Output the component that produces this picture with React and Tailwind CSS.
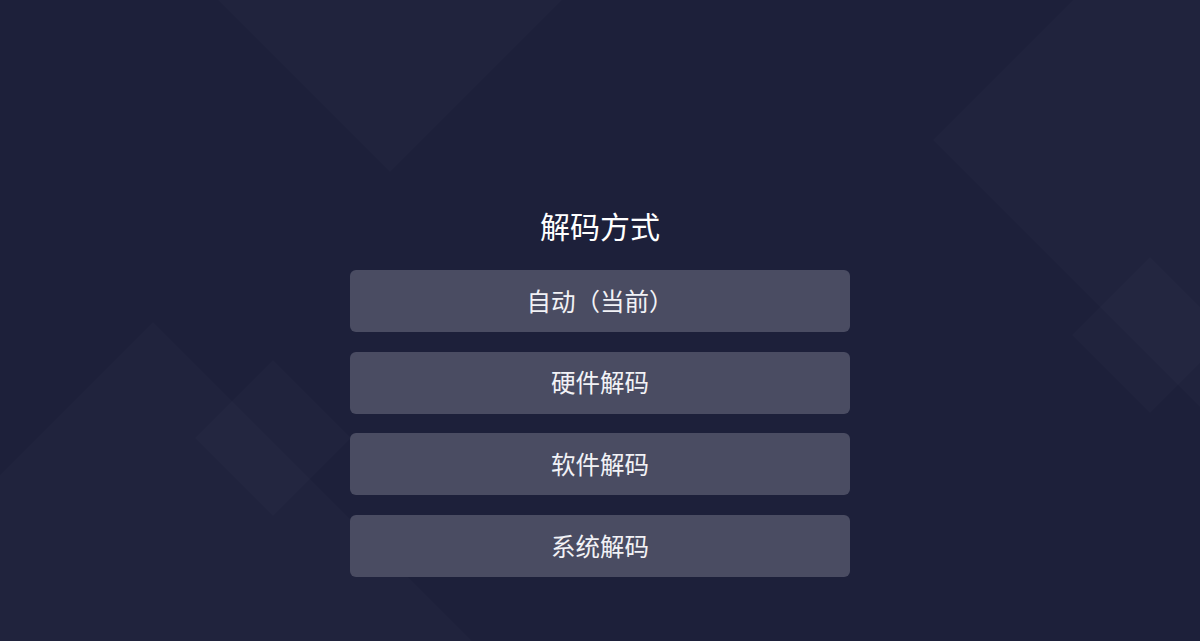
import React from "react";

const items = ["自动（当前）", "硬件解码", "软件解码", "系统解码"];

function Diamond({ cx, cy, r }) {
  return (
    <polygon
      points={`${cx},${cy - r} ${cx + r},${cy} ${cx},${cy + r} ${cx - r},${cy}`}
      fill="#ffffff"
      fillOpacity="0.014"
    />
  );
}

export default function App() {
  return (
    <div
      className="relative w-full h-[641px] overflow-hidden bg-[#1d203a] flex flex-col items-center"
      style={{ fontFamily: '"Noto Sans CJK SC", "Noto Sans", sans-serif' }}
    >
      <svg className="absolute inset-0 w-full h-full" viewBox="0 0 1200 641" preserveAspectRatio="none">
        <Diamond cx={390} cy={-10} r={182} />
        <Diamond cx={1233} cy={140} r={300} />
        <Diamond cx={1150} cy={335} r={78} />
        <Diamond cx={153} cy={652} r={330} />
        <Diamond cx={273} cy={438} r={78} />
      </svg>
      <div className="relative flex flex-col items-center pt-[204px]">
        <h1 className="text-[30px] leading-[42px] text-white font-normal">解码方式</h1>
        <div className="mt-[24px] flex flex-col gap-[19.7px]">
          {items.map((t) => (
            <button
              key={t}
              className="w-[500px] h-[62px] rounded-md bg-[#4a4c62] text-[#f2f2f6] text-[24.5px] flex items-center justify-center"
            >
              {t}
            </button>
          ))}
        </div>
      </div>
    </div>
  );
}
